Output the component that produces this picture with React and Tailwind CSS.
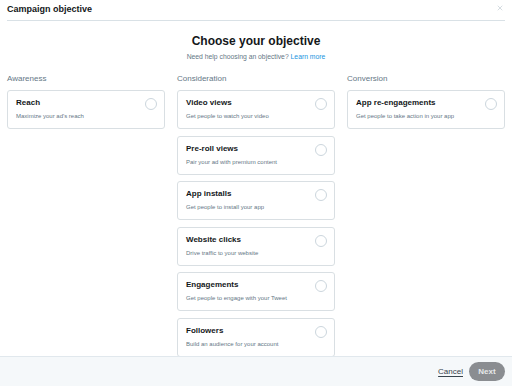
import { X } from 'lucide-react';

const COLUMNS = [
  {
    label: 'Awareness',
    items: [{ title: 'Reach', desc: "Maximize your ad's reach" }],
  },
  {
    label: 'Consideration',
    items: [
      { title: 'Video views', desc: 'Get people to watch your video' },
      { title: 'Pre-roll views', desc: 'Pair your ad with premium content' },
      { title: 'App installs', desc: 'Get people to install your app' },
      { title: 'Website clicks', desc: 'Drive traffic to your website' },
      { title: 'Engagements', desc: 'Get people to engage with your Tweet' },
      { title: 'Followers', desc: 'Build an audience for your account' },
    ],
  },
  {
    label: 'Conversion',
    items: [{ title: 'App re-engagements', desc: 'Get people to take action in your app' }],
  },
];

function ObjectiveCard({ title, desc }) {
  return (
    <div className="h-[39px] shrink-0 border border-[#d9dfe3] rounded-[3px] bg-white flex justify-between pl-[8px] pr-[7px] pt-[6px]">
      <div>
        <div className="text-[8px] leading-[12px] font-semibold text-[#14171a]">{title}</div>
        <div className="text-[6px] leading-[10px] text-[#657786] mt-[2px]">{desc}</div>
      </div>
      <div className="w-[12px] h-[12px] mt-[1px] rounded-full border border-[#ccd6dd] bg-white shrink-0" />
    </div>
  );
}

export default function App() {
  return (
    <div className="w-[512px] h-[386px] bg-white flex flex-col overflow-hidden" style={{ fontFamily: '"Liberation Sans", Arial, sans-serif' }}>
      <div className="flex-1 overflow-hidden px-[7px]">
        <div className="h-[21px] flex items-center justify-between border-b border-[#d9e1e6]">
          <span className="text-[9px] font-semibold text-[#14171a]">Campaign objective</span>
          <X size={8} strokeWidth={1.5} className="text-[#aab8c2] -mt-[5px] mr-[1px]" />
        </div>
        <div className="text-center pt-[12px]">
          <h1 className="text-[12px] leading-[16px] font-bold text-[#14171a]">Choose your objective</h1>
          <p className="text-[6.8px] leading-[10px] text-[#657786] mt-[3px]">
            Need help choosing an objective? <span className="text-[#1b95e0]">Learn more</span>
          </p>
        </div>
        <div className="grid grid-cols-3 gap-x-[12px] mt-[12px]">
          {COLUMNS.map((col) => (
            <div key={col.label} className="flex flex-col">
              <div className="text-[8px] leading-[10px] text-[#657786] mb-[6px]">{col.label}</div>
              <div className="flex flex-col gap-[6.6px]">
                {col.items.map((it) => (
                  <ObjectiveCard key={it.title} {...it} />
                ))}
              </div>
            </div>
          ))}
        </div>
      </div>
      <div className="h-[30px] shrink-0 bg-[#f5f8fa] border-t border-[#e1e8ed] flex items-center justify-end gap-[6px] pr-[7px]">
        <span className="text-[8px] text-[#38444d] underline underline-offset-2">Cancel</span>
        <span className="h-[19px] w-[36px] rounded-full bg-[#8a8d91] text-[8px] font-bold text-[#e6e8ea] flex items-center justify-center">Next</span>
      </div>
    </div>
  );
}
